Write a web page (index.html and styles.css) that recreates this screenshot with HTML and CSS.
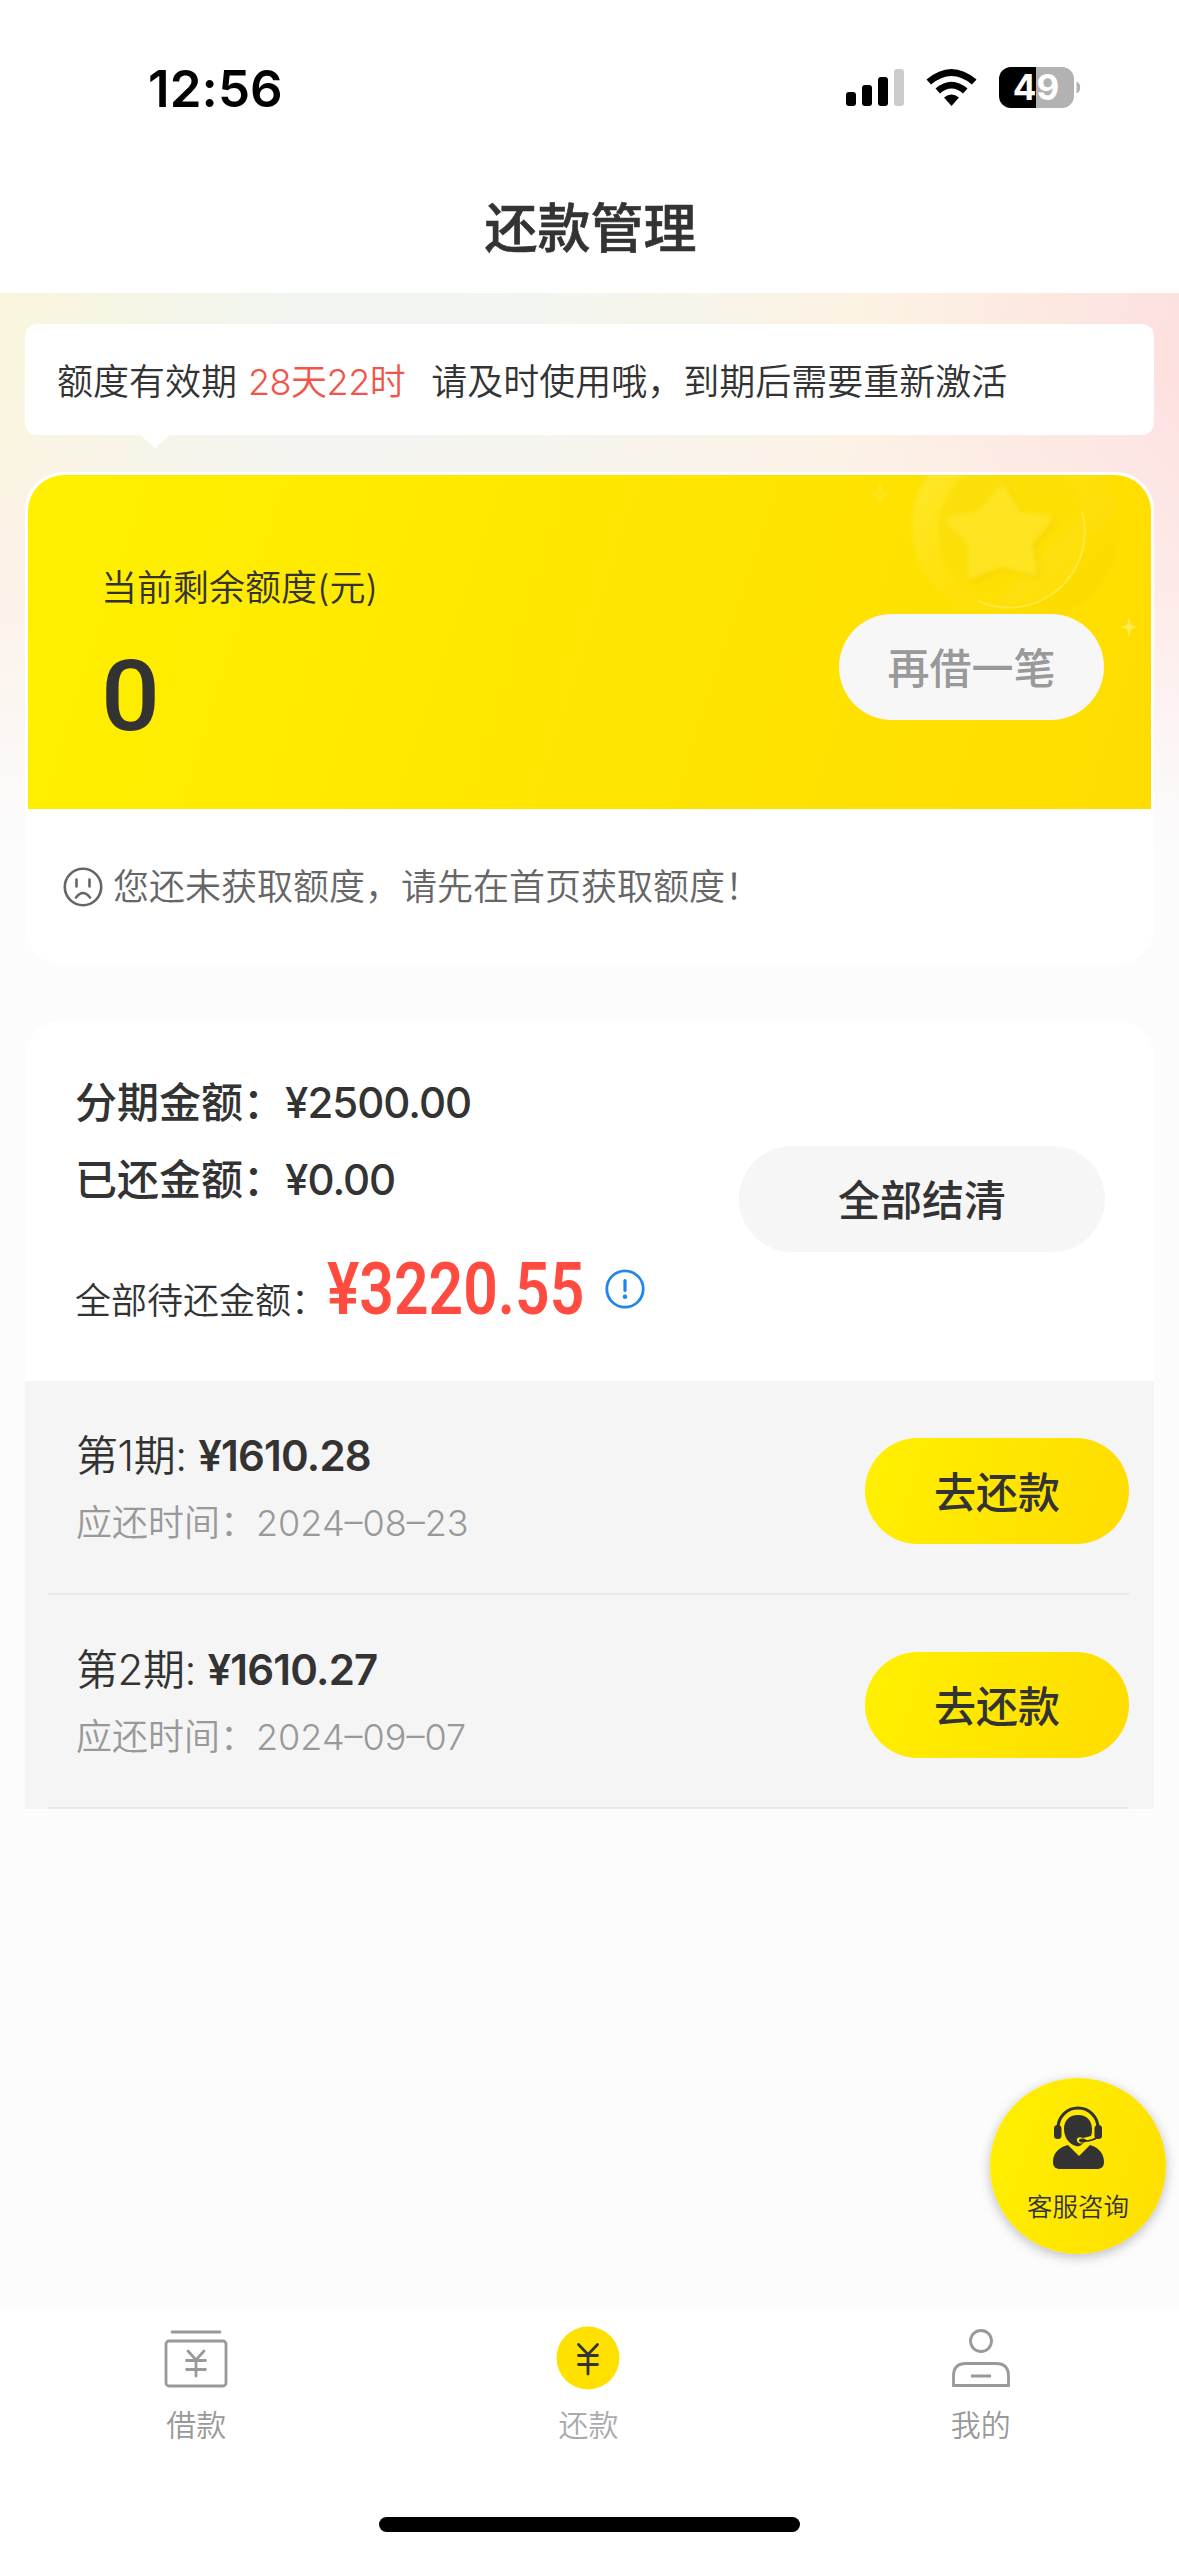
FILE: index.html
```html
<!DOCTYPE html>
<html lang="zh-CN">
<head>
<meta charset="utf-8">
<title>还款管理</title>
<link rel="stylesheet" href="styles.css">
</head>
<body>
<div class="screen">
  <header class="top">
    <div class="status">
      <span class="time">12:56</span>
      <svg class="status-icons" width="236" height="44" viewBox="0 0 236 44">
        <rect x="0" y="26" width="10" height="14" rx="3"/>
        <rect x="16" y="19" width="10" height="21" rx="3"/>
        <rect x="32" y="11" width="10" height="29" rx="3"/>
        <rect x="48" y="3" width="10" height="37" rx="3" fill="#ccc"/>
        <path d="M80.500 13.500Q105.500 -7.500 130.500 13.500L126 18.500Q105.500 1.500 85 18.500ZM89.500 22.500Q105.500 9 121.500 22.500L117 27.500Q105.500 17.500 94 27.500ZM98 31.500Q105.500 25.500 113 31.500L105.500 40Z"/>
        <path d="M190 1H165a12 12 0 0 0-12 12V30a12 12 0 0 0 12 12H190Z"/>
        <path d="M190 1H216a12 12 0 0 1 12 12V30a12 12 0 0 1-12 12H190ZM230.500 15.500a6 6.500 0 0 1 0 12Z" fill="#b2b2b2"/>
        <text x="190" y="34" text-anchor="middle" class="battery-text">49</text>
      </svg>
    </div>
    <h1 class="title">还款管理</h1>
  </header>

  <main class="content">
    <div class="tip">额度有效期<span class="tip-time">28天22时</span>请及时使用哦，到期后需要重新激活</div>

    <section class="quota">
      <div class="quota-main">
        <svg class="coin" width="320" height="230" viewBox="0 0 320 230">
          <defs>
            <linearGradient id="rim" x1="0" y1="0" x2="1" y2="1">
              <stop offset="0" stop-color="#fff06a" stop-opacity=".55"/>
              <stop offset=".55" stop-color="#ffe21a" stop-opacity=".3"/>
              <stop offset="1" stop-color="#f4cf00" stop-opacity=".5"/>
            </linearGradient>
            <linearGradient id="face" x1="0" y1="0" x2="1" y2="1">
              <stop offset="0" stop-color="#f8da00" stop-opacity=".6"/>
              <stop offset="1" stop-color="#ffe310" stop-opacity=".6"/>
            </linearGradient>
            <filter id="soft"><feGaussianBlur stdDeviation="2"/></filter>
          </defs>
          <ellipse cx="184" cy="52" rx="104" ry="98" fill="url(#rim)" filter="url(#soft)"/>
          <circle cx="180" cy="56" r="74" fill="url(#face)" filter="url(#soft)"/>
          <path d="M250 36A76 76 0 0 1 146 126" fill="none" stroke="#ffe83c" stroke-width="2"/>
          <path d="M174 19l16 25 30 4-20 24 5 28-32-8-30 12 1-32-22-22 30-7Z" fill="#f0cc00" opacity=".35" stroke="#f0cc00" stroke-width="8" stroke-linejoin="round" filter="url(#soft)"/>
          <path d="M170 15l16 25 30 4-20 24 5 28-32-8-30 12 1-32-22-22 30-7Z" fill="#ffe424" stroke="#ffe424" stroke-width="8" stroke-linejoin="round" filter="url(#soft)"/>
          <path d="M297 141l2 9 7 2-7 2-2 9-2-9-7-2 7-2Z" fill="#ffec60" opacity=".85"/>
          <path d="M48 8l3 8 8 3-8 3-3 8-3-8-8-3 8-3Z" fill="#ffea30" opacity=".45"/>
        </svg>
        <div class="quota-info">
          <div class="quota-label">当前剩余额度(元)</div>
          <div class="quota-value">0</div>
        </div>
        <div class="btn btn-disabled">再借一笔</div>
      </div>
      <div class="quota-note">
        <svg width="40" height="40" viewBox="0 0 40 40" fill="none" stroke="#666" stroke-width="2.600" stroke-linecap="round">
          <circle cx="20" cy="20" r="18.200"/>
          <path d="M13.500 12.500v7M26.500 12.500v7M13 30.500q7-9 14 0"/>
        </svg>
        <span>您还未获取额度，请先在首页获取额度！</span>
      </div>
    </section>

    <section class="bill">
      <div class="summary">
        <div class="amounts">
          <div class="amount">分期金额：<span class="num">¥2500.00</span></div>
          <div class="amount">已还金额：<span class="num">¥0.00</span></div>
          <div class="due">
            <span class="due-label">全部待还金额：</span>
            <span class="due-box"><span class="due-value">¥3220.55</span></span>
            <svg class="info" width="40" height="40" viewBox="0 0 40 40">
              <circle cx="20" cy="20" r="18.200" fill="none" stroke="#1f86ee" stroke-width="2.800"/>
              <path d="M20 11.500v10" stroke="#1f86ee" stroke-width="3.200" stroke-linecap="round"/>
              <circle cx="20" cy="27.800" r="2.300" fill="#1f86ee"/>
            </svg>
          </div>
        </div>
        <div class="btn btn-settle">全部结清</div>
      </div>
      <div class="periods">
        <div class="period">
          <div>
            <div class="period-title">第1期: <b>¥1610.28</b></div>
            <div class="period-date">应还时间：<span>2024–08–23</span></div>
          </div>
          <div class="btn btn-pay">去还款</div>
        </div>
        <div class="period">
          <div>
            <div class="period-title">第2期: <b>¥1610.27</b></div>
            <div class="period-date">应还时间：<span>2024–09–07</span></div>
          </div>
          <div class="btn btn-pay">去还款</div>
        </div>
      </div>
    </section>
  </main>

  <nav class="tabs">
    <div class="tab">
      <svg width="64" height="64" viewBox="0 0 64 64" fill="none" stroke="#999" stroke-width="2.800" stroke-linecap="round">
        <path d="M8 6H56"/>
        <rect x="2" y="15" width="60" height="45" rx="3"/>
        <path d="M24 25l8 9 8-9M32 34V50M22.500 34.500h19M22.500 43.500h19"/>
      </svg>
      <span>借款</span>
    </div>
    <div class="tab tab-active">
      <svg width="64" height="64" viewBox="0 0 64 64" fill="none" stroke="#333" stroke-width="2.800" stroke-linecap="round">
        <circle cx="32" cy="32" r="31.500" fill="#ffe100" stroke="none"/>
        <path d="M22.500 18.500l9.500 10 9.500-10M32 28.500V48M22.500 29.500h19M22.500 38.500h19"/>
      </svg>
      <span>还款</span>
    </div>
    <div class="tab">
      <svg width="64" height="64" viewBox="0 0 64 64" fill="none" stroke="#999" stroke-width="2.800">
        <circle cx="32" cy="15" r="10.500"/>
        <path d="M4.500 59.500V50Q4.500 37.500 17 37.500H47Q59.500 37.500 59.500 50V59.500ZM22 50H42"/>
      </svg>
      <span>我的</span>
    </div>
  </nav>
  <div class="home-indicator"></div>

  <div class="service">
    <svg width="54" height="66" viewBox="0 0 54 66">
      <path d="M7 25V22a20 20 0 0 1 40 0V25" fill="none" stroke="#333" stroke-width="3"/>
      <rect x="3" y="19" width="7.500" height="14" rx="3.500" fill="#333"/>
      <rect x="43.500" y="19" width="7.500" height="14" rx="3.500" fill="#333"/>
      <path d="M27 9c9 0 14 6 14 14 0 2 0 5-1 7l-8 2c-4-2-7 0-6 3 1 3 5 3 7 1-3 4-5 5-8 4-8-2-12-10-12-17 0-8 5-14 14-14Z" fill="#333"/>
      <path d="M46 31q-3 4-14 4" fill="none" stroke="#333" stroke-width="2"/>
      <ellipse cx="31.500" cy="34.500" rx="3.500" ry="2" fill="#333"/>
      <path d="M17 39L28 50l11-11c8 2 14 8 14 17 0 5-3 7-7 7H9c-4 0-7-2-7-7 0-9 6-15 15-17Z" fill="#333"/>
    </svg>
    <span>客服咨询</span>
  </div>
</div>
</body>
</html>
```
FILE: styles.css
```css
* { box-sizing: border-box; }

body {
  margin: 0;
  background: #fcfcfc;
  color: #333;
  font-family: Inter, "Noto Sans CJK SC", sans-serif;
  font-weight: 350;
}

svg { display: block; flex: none; }

.screen {
  position: relative;
  display: flex;
  flex-direction: column;
  width: 1179px;
  height: 2556px;
  overflow: hidden;
  white-space: nowrap;
}

.top { height: 293px; background: #fff; }

.status {
  display: flex;
  justify-content: space-between;
  align-items: flex-start;
  padding: 66px 97px 0 148px;
}

.time {
  color: #000;
  font-size: 51px;
  font-weight: 600;
  line-height: 45px;
  letter-spacing: 0.1px;
}

.battery-text {
  fill: #fff;
  font-size: 35px;
  font-weight: 700;
}

.title {
  margin: 78px 0 0;
  font-size: 53px;
  font-weight: 500;
  line-height: 80px;
  text-align: center;
  text-indent: 2px;
  -webkit-text-stroke: 0.6px #333;
}

.content {
  flex: 1;
  padding: 31px 25px 0;
  background:
    linear-gradient(rgba(252, 252, 252, 0), rgba(252, 252, 252, 0) 80px, rgba(253, 240, 237, 0.7) 300px, #fcfafa 520px, #fcfcfc 572px),
    linear-gradient(97deg, #faf6dd 0, #f1f6f2 22%, #f3f6f0 38%, #fcf3e4 60%, #fddfdf 85%, #fddde3);
}

.tip {
  position: relative;
  height: 111px;
  padding-left: 32px;
  border-radius: 12px;
  background: #fff;
  font-size: 36px;
  line-height: 117px;
}

.tip::after {
  content: "";
  position: absolute;
  left: 114px;
  top: 110px;
  border: 16px solid transparent;
  border-top: 14px solid #fff;
  border-bottom: 0;
}

.tip-time {
  margin: 0 26px 0 11px;
  color: #f3544a;
  letter-spacing: -0.5px;
}

.quota {
  height: 493px;
  margin-top: 37px;
  padding: 3px;
  border-radius: 38px;
  background: #fff;
}

.quota-main {
  position: relative;
  display: flex;
  justify-content: space-between;
  height: 334px;
  padding: 0 47px 0 73px;
  border-radius: 36px 36px 0 0;
  background: linear-gradient(108deg, #fff000, #ffe600 50%, #ffdc00);
  overflow: hidden;
}

.coin { position: absolute; right: -1px; top: 0; }

.quota-info { padding-top: 86px; }

.quota-label { font-size: 36px; line-height: 54px; }

.quota-value {
  margin-top: 32px;
  font-family: Roboto, sans-serif;
  font-size: 98px;
  font-weight: 500;
  line-height: 100px;
  transform: scaleX(1.06);
  transform-origin: left;
}

.btn {
  position: relative;
  flex: none;
  height: 106px;
  border-radius: 53px;
  font-size: 42px;
  font-weight: 500;
  line-height: 109px;
  text-align: center;
}

.btn-disabled {
  width: 265px;
  margin-top: 139px;
  background: #f7f7f8;
  color: #999;
}

.quota-note {
  display: flex;
  align-items: center;
  gap: 10px;
  height: 155px;
  padding-left: 35px;
  color: #666;
  font-size: 36px;
  line-height: 40px;
}

.bill { margin-top: 55px; }

.summary {
  display: flex;
  justify-content: space-between;
  height: 361px;
  padding: 44px 49px 0 50px;
  border-radius: 38px 38px 0 0;
  background: #fff;
}

.amount {
  font-size: 42px;
  font-weight: 500;
  line-height: 77px;
}

.num { letter-spacing: -1px; }

.due { display: flex; height: 110px; padding-top: 26px; }

.due-label { font-size: 36px; line-height: 114px; }

.due-box { width: 278px; line-height: 90px; }

.due-value {
  display: inline-block;
  color: #ff4b40;
  font-family: Roboto, sans-serif;
  font-size: 73px;
  font-weight: 600;
  transform: scaleX(0.83);
  transform-origin: left;
}

.info { margin-top: 25px; }

.btn-settle { width: 366px; margin-top: 82px; background: #f6f6f6; }

.periods { height: 428px; background: #f5f5f5; }

.period {
  display: flex;
  justify-content: space-between;
  height: 214px;
  margin: 0 25px 0 23px;
  padding: 57px 0 0 28px;
  border-bottom: 2px solid #e9e9e9;
}

.period-title { margin-top: -14px; font-size: 42px; line-height: 64px; letter-spacing: -0.4px; }

.period-title b { font-weight: 600; letter-spacing: -0.8px; }

.period-date { color: #999; font-size: 36px; line-height: 70px; }

.btn-pay { width: 264px; background: linear-gradient(108deg, #fff000, #ffe600 50%, #ffdc00); }

.tabs {
  display: flex;
  height: 209px;
  padding: 18px 2px 0 0;
  background: #fff;
}

.tab {
  flex: 1;
  display: flex;
  flex-direction: column;
  align-items: center;
  color: #999;
  font-size: 30px;
  line-height: 70px;
}

.tab-active { color: #aaaab0; }

.home-indicator {
  height: 39px;
  padding: 0 379px;
  background: #fff;
}

.home-indicator::before {
  content: "";
  display: block;
  height: 15px;
  border-radius: 8px;
  background: #000;
}

.service {
  position: absolute;
  left: 990px;
  top: 2078px;
  display: flex;
  flex-direction: column;
  align-items: center;
  width: 176px;
  height: 176px;
  padding: 28px 0 0;
  border-radius: 50%;
  background: linear-gradient(108deg, #fff000, #ffe600 60%, #ffde00);
  box-shadow: 0 3px 12px rgba(0, 0, 0, 0.25);
  font-size: 25.5px;
  line-height: 70px;
}
```
